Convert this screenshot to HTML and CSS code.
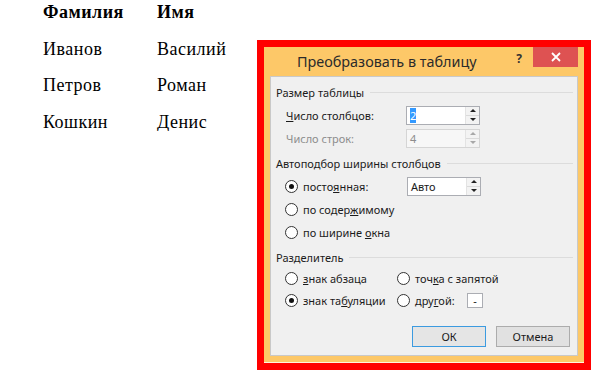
FILE: index.html
```html
<!DOCTYPE html>
<html lang="ru">
<head>
    <meta charset="UTF-8">
    <meta name="viewport" content="width=device-width, initial-scale=1.0">
    <title>Преобразовать в таблицу</title>
    <link rel="stylesheet" href="styles.css">
</head>
<body>
    <div class="names">
        <div class="th">Фамилия</div>
        <div class="th">Имя</div>
        <div>Иванов</div>
        <div>Василий</div>
        <div>Петров</div>
        <div>Роман</div>
        <div>Кошкин</div>
        <div>Денис</div>
    </div>

    <div class="frame">
        <div class="dialog">
            <div class="titlebar">
                <span class="title">Преобразовать в таблицу</span>
                <span class="help">?</span>
                <span class="close">
                    <svg width="10" height="10" viewBox="0 0 10 10">
                        <path d="M1 1 L9 9 M9 1 L1 9" stroke="#fff" stroke-width="1.8" fill="none"/>
                    </svg>
                </span>
            </div>

            <div class="panel">
                <div class="group-title g1">Размер таблицы</div>
                <div class="row r1">
                    <span class="field-label"><u>Ч</u>исло столбцов:</span>
                    <div class="spin">
                        <span class="value"><span class="sel">2</span></span>
                        <span class="arrows">
                            <span class="up"></span>
                            <span class="down"></span>
                        </span>
                    </div>
                </div>
                <div class="row r2 disabled">
                    <span class="field-label">Число строк:</span>
                    <div class="spin">
                        <span class="value">4</span>
                        <span class="arrows">
                            <span class="up"></span>
                            <span class="down"></span>
                        </span>
                    </div>
                </div>

                <div class="group-title g2">Автоподбор ширины столбцов</div>
                <div class="row opt r3">
                    <span class="radio checked"></span>
                    <span class="opt-label">посто<u>я</u>нная:</span>
                    <div class="spin">
                        <span class="value">Авто</span>
                        <span class="arrows">
                            <span class="up"></span>
                            <span class="down"></span>
                        </span>
                    </div>
                </div>
                <div class="row opt r4">
                    <span class="radio"></span>
                    <span>по содер<u>ж</u>имому</span>
                </div>
                <div class="row opt r5">
                    <span class="radio"></span>
                    <span>по ширине <u>о</u>кна</span>
                </div>

                <div class="group-title g3">Разделитель</div>
                <div class="row opt r6">
                    <div class="col">
                        <span class="radio"></span>
                        <span><u>з</u>нак абзаца</span>
                    </div>
                    <div class="col">
                        <span class="radio"></span>
                        <span>точ<u>к</u>а с запятой</span>
                    </div>
                </div>
                <div class="row opt r7">
                    <div class="col">
                        <span class="radio checked"></span>
                        <span>знак та<u>б</u>уляции</span>
                    </div>
                    <div class="col">
                        <span class="radio"></span>
                        <span class="other-label">дру<u>г</u>ой:</span>
                        <span class="small-box">-</span>
                    </div>
                </div>

                <div class="buttons">
                    <button class="btn default">ОК</button>
                    <button class="btn">Отмена</button>
                </div>
            </div>
        </div>
    </div>
</body>
</html>
```

FILE: styles.css
```css
body {
    margin: 0;
    background: #fff;
    font-family: "Liberation Serif", serif;
    color: #000;
}

.names {
    display: grid;
    grid-template-columns: 114px auto;
    row-gap: 18.5px;
    width: max-content;
    padding: 3px 0 0 43px;
    font-size: 18px;
    line-height: 18px;
    letter-spacing: 0.5px;
}
.names .th {
    font-weight: bold;
}

/* окно поверх документа */
.frame {
    position: absolute;
    left: 257px;
    top: 40px;
    border: 7px solid #ff0000;
}
.dialog {
    width: 320px;
    height: 316px;
    box-sizing: border-box;
    padding: 0 6px;
    background: #fdc868;
    border-bottom: 1px solid #fff3dc;
    font-family: "Noto Sans", "Open Sans", sans-serif;
    font-size: 11px;
    color: #1b1b1b;
}

.titlebar {
    height: 29px;
    display: flex;
    align-items: flex-start;
}
.title {
    margin: 5px 0 0 27px;
    font-size: 14.4px;
    line-height: 20px;
    color: #2b2b2b;
}
.help {
    margin: 4px 11px 0 auto;
    font-weight: bold;
    font-size: 12px;
    line-height: 16px;
    color: #333;
}
.close {
    width: 45px;
    height: 20px;
    background: #de5252;
    display: flex;
    align-items: center;
    justify-content: center;
}

.panel {
    height: 280px;
    box-sizing: border-box;
    border: 1px solid #c9c9c9;
    background: #f0f0f0;
    padding: 6px 0 0 5px;
}

.group-title {
    height: 18px;
    display: flex;
    align-items: center;
    padding-right: 4px;
}
.group-title::after {
    content: "";
    flex: 1;
    height: 1px;
    margin-left: 6px;
    background: #dcdcdc;
}

.row {
    height: 20px;
    display: flex;
    align-items: center;
    padding-left: 10px;
}
.row.opt {
    padding-left: 9px;
}
.r1 { margin-top: 4px; }
.r2 { margin-top: 3px; }
.g2 { margin-top: 6px; }
.r3 { margin-top: 4px; }
.r4, .r5 { margin-top: 3px; }
.g3 { margin-top: 6px; }
.r6, .r7 { margin-top: 2px; }

.field-label {
    width: 120px;
}
.disabled {
    color: #8d8d8d;
}

.spin {
    width: 74px;
    height: 19px;
    box-sizing: border-box;
    display: flex;
    border: 1px solid #abadb3;
    background: #fff;
}
.spin .value {
    flex: 1;
    padding-left: 3px;
    line-height: 17px;
}
.spin .sel {
    background: #3399ff;
    color: #fff;
}
.disabled .spin {
    border-color: #d5d5d5;
    background: #f7f7f7;
}
.arrows {
    width: 13px;
    display: flex;
    flex-direction: column;
    border-left: 1px solid #e3e3e3;
}
.arrows span {
    flex: 1;
    background: #f3f3f3;
    display: flex;
    align-items: center;
    justify-content: center;
}
.arrows .up {
    border-bottom: 1px solid #dadada;
}
.arrows .up::before,
.arrows .down::before {
    content: "";
    border-left: 3px solid transparent;
    border-right: 3px solid transparent;
}
.arrows .up::before {
    border-bottom: 3px solid #222;
}
.arrows .down::before {
    border-top: 3px solid #222;
}
.disabled .arrows .up::before {
    border-bottom-color: #a8a8a8;
}
.disabled .arrows .down::before {
    border-top-color: #a8a8a8;
}

.radio {
    width: 13px;
    height: 13px;
    box-sizing: border-box;
    border: 1px solid #333;
    border-radius: 50%;
    background: #fff;
    margin-right: 5px;
    display: flex;
    align-items: center;
    justify-content: center;
    flex-shrink: 0;
}
.radio.checked::before {
    content: "";
    width: 5px;
    height: 5px;
    border-radius: 50%;
    background: #111;
}
.opt-label {
    width: 104px;
}

.col {
    width: 112px;
    display: flex;
    align-items: center;
}
.other-label {
    width: 52px;
}
.small-box {
    width: 16px;
    height: 15px;
    box-sizing: border-box;
    border: 1px solid #abadb3;
    background: #fff;
    text-align: center;
    line-height: 13px;
}

.buttons {
    margin-top: 16px;
    padding-right: 7px;
    display: flex;
    justify-content: flex-end;
    gap: 10px;
}
.btn {
    width: 74px;
    height: 21px;
    box-sizing: border-box;
    border: 1px solid #acacac;
    background: #e1e1e1;
    font-family: inherit;
    font-size: 11px;
    color: #1b1b1b;
    padding: 0;
}
.btn.default {
    border-color: #3c9be0;
    background: #e5e5e5;
}
```
